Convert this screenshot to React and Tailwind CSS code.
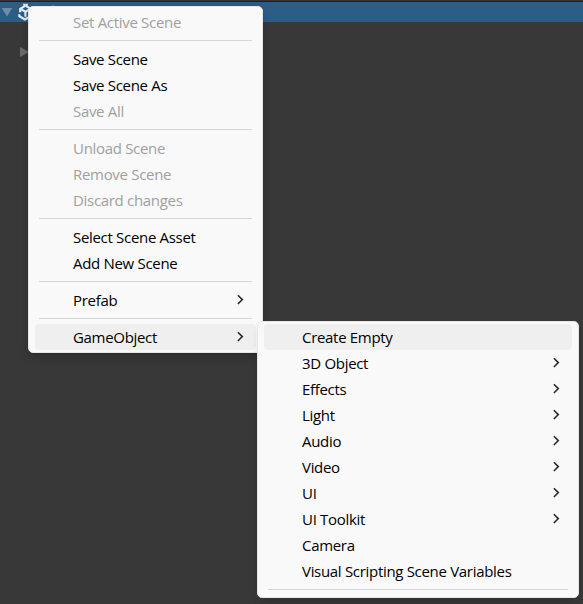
import React from "react";

const sceneMenu = [
  { label: "Set Active Scene", disabled: true },
  null,
  { label: "Save Scene" },
  { label: "Save Scene As" },
  { label: "Save All", disabled: true },
  null,
  { label: "Unload Scene", disabled: true },
  { label: "Remove Scene", disabled: true },
  { label: "Discard changes", disabled: true },
  null,
  { label: "Select Scene Asset" },
  { label: "Add New Scene" },
  null,
  { label: "Prefab", submenu: true },
  null,
  { label: "GameObject", submenu: true, active: true },
];

const objectMenu = [
  { label: "Create Empty", active: true },
  { label: "3D Object", submenu: true },
  { label: "Effects", submenu: true },
  { label: "Light", submenu: true },
  { label: "Audio", submenu: true },
  { label: "Video", submenu: true },
  { label: "UI", submenu: true },
  { label: "UI Toolkit", submenu: true },
  { label: "Camera" },
  { label: "Visual Scripting Scene Variables" },
  null,
];

function Chevron() {
  return (
    <svg className="h-3 w-2" viewBox="0 0 8 12" fill="none" stroke="#2b2b2b" strokeWidth="1.6">
      <path d="M1.9 1.2 6.3 5.6 1.9 10" />
    </svg>
  );
}

function Menu({ items, className }) {
  return (
    <div
      className={`absolute rounded-[5px] border border-[#e6e6e6] bg-[#f9f9f9] py-[2px] ${className}`}
    >
      {items.map((item, i) =>
        item ? (
          <div
            key={i}
            className={`mx-1.5 flex h-[26px] items-center justify-between rounded pl-[38px] pr-3 ${
              item.active ? "bg-[#efefef]" : ""
            } ${item.disabled ? "text-[#a0a0a0]" : "text-black"}`}
          >
            <span className="whitespace-nowrap pt-px">{item.label}</span>
            {item.submenu && <Chevron />}
          </div>
        ) : (
          <div key={i} className="mx-2.5 h-[11px] pt-[5px]">
            <div className="h-px bg-[#d7d7d7]" />
          </div>
        )
      )}
    </div>
  );
}

export default function App() {
  return (
    <div className="relative h-[604px] w-[583px] overflow-hidden bg-[#383838] font-['Open_Sans',sans-serif] text-[15px] leading-[27px] tracking-[-0.31px]">
      <div className="h-0.5 border-b border-[#202020] bg-[#343434]" />
      <div className="flex h-5 items-center bg-[#2c5d87]">
        <svg className="h-5 w-15" viewBox="0 0 60 20">
          <path d="M1.7 6h10.6L7 14.5z" fill="#6d8ca7" />
          <g fill="none" stroke="#e8edf1" strokeWidth="2.2">
            <path d="M24.3 1.8v2.6L20.2 6.9v3.3M19.3 12.3v1.9l5.6 3.2 5.6-3.2M26.7 1.8v2.6L31 7" />
            <path d="m21.3 7.4 4.1 2.4 4.1-2.4M25.4 9.8v5" />
          </g>
          <path d="M53 3v1.5" stroke="#7d9bb4" />
        </svg>
      </div>
      <div className="flex h-[60px] items-center pl-5">
        <svg className="h-2.5 w-2.5" viewBox="0 0 10 10" fill="#6b6b6b">
          <path d="M0 0 9 5 0 10z" />
        </svg>
      </div>
      <Menu
        items={sceneMenu}
        className="left-7 top-1.5 w-[235px] shadow-[0_5px_9px_rgba(0,0,0,0.2)]"
      />
      <Menu
        items={objectMenu}
        className="left-[257px] top-[321px] w-[322px] shadow-[0_5px_9px_-3px_rgba(0,0,0,0.2)]"
      />
    </div>
  );
}
